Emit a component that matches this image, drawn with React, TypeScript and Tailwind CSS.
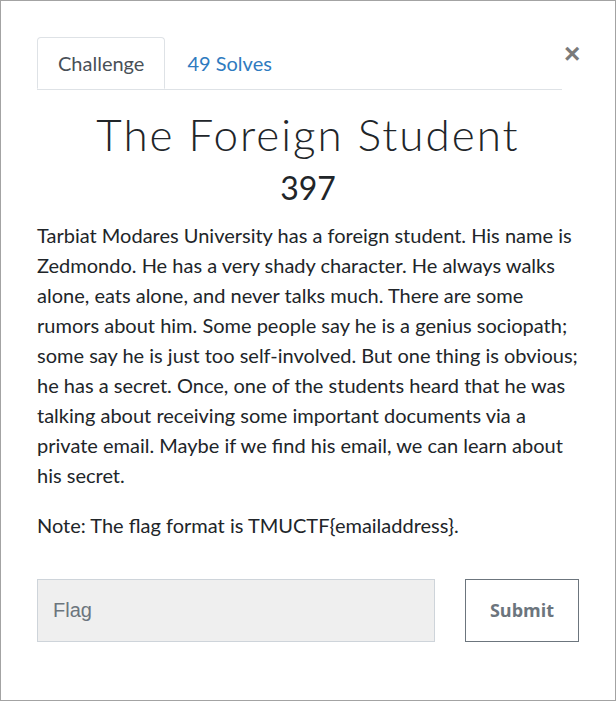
import React from 'react';

const App: React.FC = () => {
  return (
    <div className="w-[616px] h-[701px] bg-white border border-[#a3a3a3] font-['Lato',sans-serif] text-[#212529]">
      <div className="pl-9 pr-9 pt-9">
        <div className="flex items-start">
          <div className="flex flex-1 border-b border-[#dee2e6]">
            <div className="px-5 h-[52px] flex items-center text-[20px] text-[#495057] bg-white border border-[#dee2e6] border-b-white rounded-t-[4px] -mb-px">
              Challenge
            </div>
            <div className="px-[22px] h-[52px] flex items-center text-[20px] text-[#2f7bc0]">
              49 Solves
            </div>
          </div>
          <button className="ml-[2px] mt-[3px] w-[15px] text-[28px] leading-none font-bold text-[#7a7a7a] font-['Liberation_Sans',sans-serif]">
            ×
          </button>
        </div>

        <h2 className="mt-[20px] text-center text-[44px] leading-[48px] font-light tracking-[2px] text-[#212529]">
          The Foreign Student
        </h2>
        <h3 className="mt-[10px] text-center text-[32px] leading-[40px] font-normal text-[#212529]">397</h3>

        <p className="mt-[12px] text-[20px] leading-[30px]">
          Tarbiat Modares University has a foreign student. His name is Zedmondo. He has a very shady character. He always walks alone, eats alone, and never talks much. There are some rumors about him. Some people say he is a genius sociopath; some say he is just too self-involved. But one thing is obvious; he has a secret. Once, one of the students heard that he was talking about receiving some important documents via a private email. Maybe if we find his email, we can learn about his secret.
        </p>
        <p className="mt-[20px] text-[20px] leading-[30px]">Note: The flag format is TMUCTF{'{'}emailaddress{'}'}.</p>

        <div className="mt-[39px] flex items-center">
          <input
            type="text"
            placeholder="Flag"
            className="w-[398px] h-[63px] bg-[#efefef] border border-[#ced4da] px-[15px] text-[20px] font-['Liberation_Sans',sans-serif] placeholder:text-[#6c757d] outline-none"
          />
          <button className="ml-auto w-[114px] h-[63px] border border-[#6c757d] bg-white text-[18px] font-bold text-[#6c757d] font-['Open_Sans',sans-serif]">
            Submit
          </button>
        </div>
      </div>
    </div>
  );
};

export default App;
